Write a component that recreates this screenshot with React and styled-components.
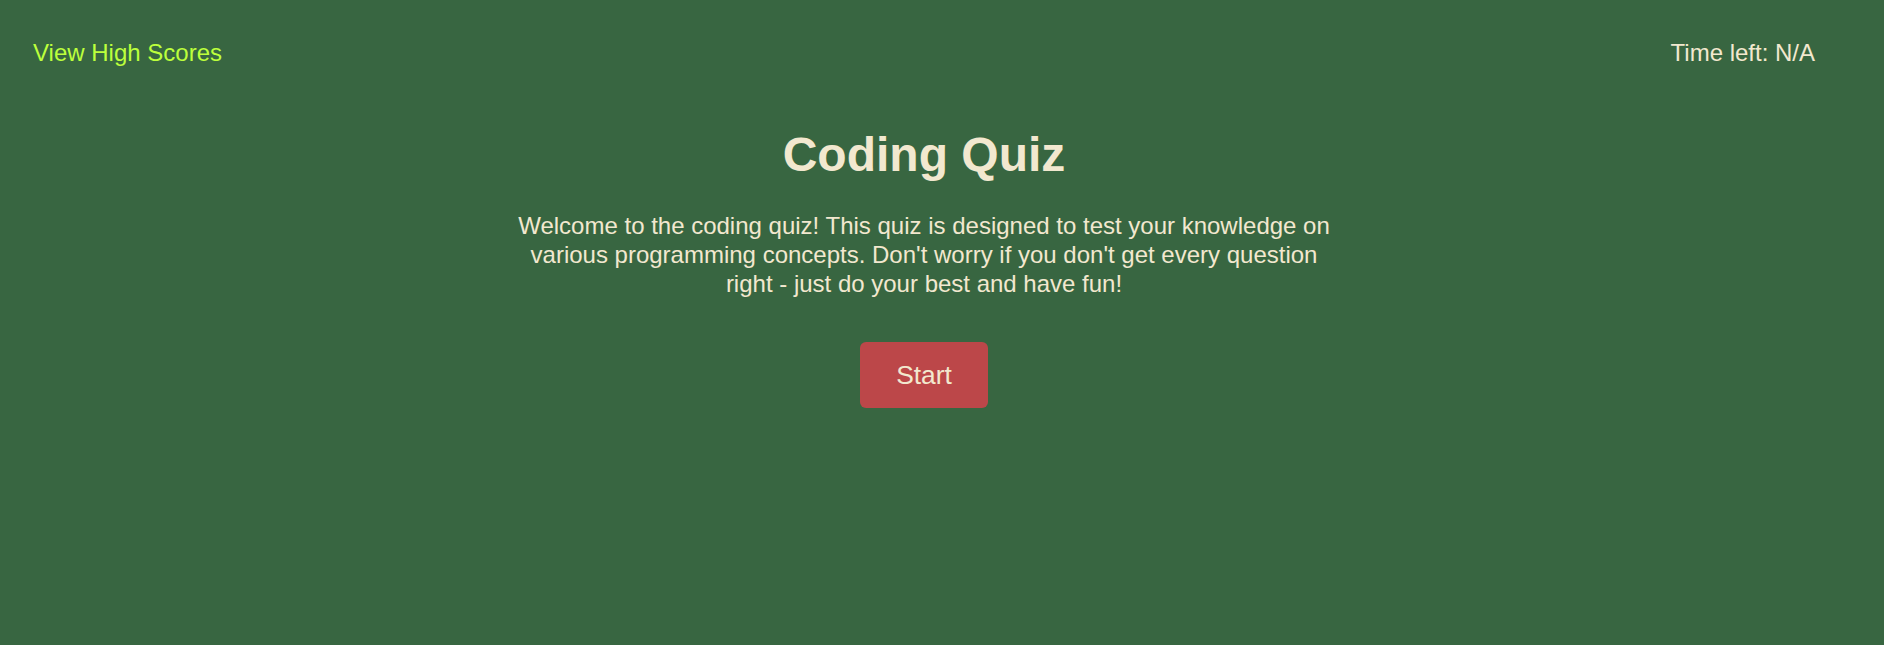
import React from 'react';
import styled, { createGlobalStyle } from 'styled-components';

const GlobalStyle = createGlobalStyle`
  html, body {
    margin: 0;
    padding: 0;
    background-color: #386641;
  }
  body {
    font-family: "Liberation Sans", Arial, sans-serif;
    color: #f2e8cf;
  }
`;

const Page = styled.div`
  width: 1848px;
  min-height: 645px;
  background-color: #386641;
`;

const Header = styled.header`
  display: flex;
  justify-content: space-between;
  align-items: center;
  padding: 39px 33px 0;
  font-size: 24px;
`;

const ScoresLink = styled.a`
  color: #bcff3c;
  text-decoration: none;
  cursor: pointer;
`;

const Timer = styled.div`
  color: #f2e8cf;
`;

const Main = styled.main`
  display: flex;
  flex-direction: column;
  align-items: center;
  text-align: center;
  padding-top: 60px;
`;

const Title = styled.h1`
  margin: 0;
  font-size: 48px;
  font-weight: bold;
`;

const Intro = styled.p`
  margin: 29px 0 0;
  max-width: 830px;
  font-size: 24px;
  line-height: 29px;
`;

const StartButton = styled.button`
  margin-top: 44px;
  width: 128px;
  height: 66px;
  border: none;
  border-radius: 6px;
  background-color: #bc4749;
  color: #f2e8cf;
  font-family: "Liberation Sans", Arial, sans-serif;
  font-size: 26.4px;
  cursor: pointer;
`;

export default function App() {
  return (
    <Page>
      <GlobalStyle />
      <Header>
        <ScoresLink>View High Scores</ScoresLink>
        <Timer>Time left: N/A</Timer>
      </Header>
      <Main>
        <Title>Coding Quiz</Title>
        <Intro>
          Welcome to the coding quiz! This quiz is designed to test your
          knowledge on various programming concepts. Don't worry if you don't
          get every question right - just do your best and have fun!
        </Intro>
        <StartButton>Start</StartButton>
      </Main>
    </Page>
  );
}
